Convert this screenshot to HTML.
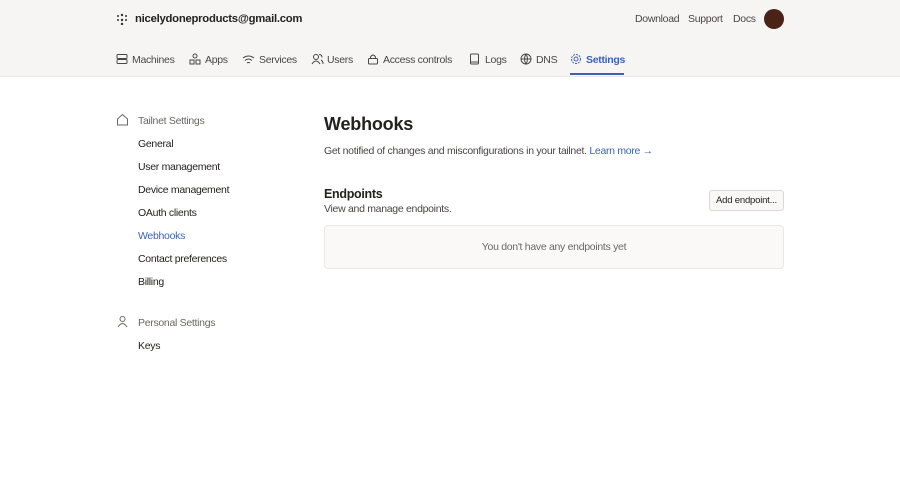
<!DOCTYPE html><html><head><style>
body{margin:0;width:900px;height:484px;background:#fff;font-family:"Liberation Sans",sans-serif;color:#24211f;position:relative;overflow:hidden}
.top{position:absolute;left:0;top:0;width:900px;height:76px;background:#f7f5f4;border-bottom:1px solid #ebe8e6}
.a{position:absolute;white-space:nowrap}
.t{font-size:10.5px;letter-spacing:-0.3px}
.nav{font-size:10.5px;letter-spacing:-0.3px;color:#4a4644;top:54px}
.ic{position:absolute;top:53px}
.side{font-size:10.5px;letter-spacing:-0.3px;left:138px}
</style></head><body>
<div class="top"></div>
<svg class="a" style="left:116px;top:13px" width="12" height="12"><g fill="#333"><circle cx="2" cy="3" r="1"/><circle cx="6" cy="2" r="1.2"/><circle cx="10" cy="3" r="1"/><circle cx="2" cy="7" r="1"/><circle cx="6" cy="7" r="1.2"/><circle cx="10" cy="7" r="1"/><circle cx="6" cy="11" r="1.2"/></g></svg>
<div class="a" style="left:135px;top:13px;font-size:11.3px;letter-spacing:-0.25px;font-weight:bold;color:#24211f">nicelydoneproducts@gmail.com</div>
<div class="a t" style="left:635px;top:13px;color:#4a4644">Download</div>
<div class="a t" style="left:688px;top:13px;color:#4a4644">Support</div>
<div class="a t" style="left:733px;top:13px;color:#4a4644">Docs</div>
<div class="a" style="left:764px;top:9px;width:20px;height:20px;border-radius:50%;background:#4a2218"></div>
<svg class="ic" style="left:116px" width="12" height="12"><rect x="1" y="1.5" width="10" height="4" rx="1" fill="none" stroke="#4a4644"/><rect x="1" y="6.5" width="10" height="4" rx="1" fill="none" stroke="#4a4644"/></svg>
<div class="a nav" style="left:132px">Machines</div>
<svg class="ic" style="left:189px" width="12" height="12"><circle cx="6" cy="3" r="2" fill="none" stroke="#4a4644"/><rect x="1" y="7" width="4" height="4" fill="none" stroke="#4a4644"/><rect x="7" y="7" width="4" height="4" fill="none" stroke="#4a4644"/></svg>
<div class="a nav" style="left:205px">Apps</div>
<svg class="ic" style="left:242px" width="13" height="12"><path d="M1 5q5.5-4 11 0M3 7.5q3.5-3 7 0M5 10q1.5-1 3 0" fill="none" stroke="#4a4644"/></svg>
<div class="a nav" style="left:259px">Services</div>
<svg class="ic" style="left:311px" width="13" height="12"><circle cx="5" cy="4" r="2.5" fill="none" stroke="#4a4644"/><path d="M1 11q4-6 8 0M8 1.5q3 0 3 3M10 7q2 1 2 4" fill="none" stroke="#4a4644"/></svg>
<div class="a nav" style="left:327px">Users</div>
<svg class="ic" style="left:367px" width="12" height="12"><rect x="1.5" y="5.5" width="9" height="5.5" rx="1" fill="none" stroke="#4a4644"/><path d="M3.5 5.5V4q2.5-4 5 0v1.5" fill="none" stroke="#4a4644"/></svg>
<div class="a nav" style="left:383px">Access controls</div>
<svg class="ic" style="left:469px" width="11" height="12"><rect x="1.5" y="1" width="8" height="10" rx="1" fill="none" stroke="#4a4644"/><path d="M1.5 9h8" stroke="#4a4644"/></svg>
<div class="a nav" style="left:485px">Logs</div>
<svg class="ic" style="left:520px" width="12" height="12"><circle cx="6" cy="6" r="5" fill="none" stroke="#4a4644"/><path d="M1 6h10M6 1q-3 5 0 10q3-5 0-10" fill="none" stroke="#4a4644"/></svg>
<div class="a nav" style="left:536px">DNS</div>
<svg class="ic" style="left:570px" width="12" height="12"><circle cx="6" cy="6" r="4.5" fill="none" stroke="#3b63b5" stroke-dasharray="2 1"/><circle cx="6" cy="6" r="2" fill="none" stroke="#3b63b5"/></svg>
<div class="a nav" style="left:586px;color:#3b63b5;font-weight:bold">Settings</div>
<div class="a" style="left:570px;top:73px;width:54px;height:2px;background:#3b63b5"></div>
<svg class="a" style="left:116px;top:113px" width="13" height="13"><path d="M1.5 6L6.5 1.5 11.5 6V12h-10z" fill="none" stroke="#6b6764"/></svg>
<div class="a t" style="left:138px;top:115px;color:#6b6764">Tailnet Settings</div>
<div class="a side" style="top:138px">General</div>
<div class="a side" style="top:161px">User management</div>
<div class="a side" style="top:184px">Device management</div>
<div class="a side" style="top:207px">OAuth clients</div>
<div class="a side" style="top:230px;color:#3b63b5">Webhooks</div>
<div class="a side" style="top:253px">Contact preferences</div>
<div class="a side" style="top:276px">Billing</div>
<svg class="a" style="left:116px;top:315px" width="13" height="13"><circle cx="6.5" cy="4" r="2.5" fill="none" stroke="#6b6764"/><path d="M2 12q4.5-7 9 0" fill="none" stroke="#6b6764"/></svg>
<div class="a t" style="left:138px;top:317px;color:#6b6764">Personal Settings</div>
<div class="a side" style="top:340px">Keys</div>
<div class="a" style="left:324px;top:114px;font-size:18px;letter-spacing:-0.2px;font-weight:bold">Webhooks</div>
<div class="a t" style="left:324px;top:145px;color:#4a4644">Get notified of changes and misconfigurations in your tailnet. <span style="color:#3b63b5">Learn more →</span></div>
<div class="a" style="left:324px;top:187px;font-size:12.5px;letter-spacing:-0.3px;font-weight:bold">Endpoints</div>
<div class="a t" style="left:324px;top:203px;color:#4a4644">View and manage endpoints.</div>
<div class="a" style="left:709px;top:190px;width:73px;height:19px;border:1px solid #dcd8d5;border-radius:3px;background:#f9f8f7;font-size:9.5px;letter-spacing:-0.2px;line-height:19px;text-align:center">Add endpoint...</div>
<div class="a t" style="left:324px;top:225px;width:458px;height:42px;border:1px solid #ebe8e6;border-radius:4px;background:#faf9f8;line-height:42px;text-align:center;color:#6b6764">You don't have any endpoints yet</div>
</body></html>
